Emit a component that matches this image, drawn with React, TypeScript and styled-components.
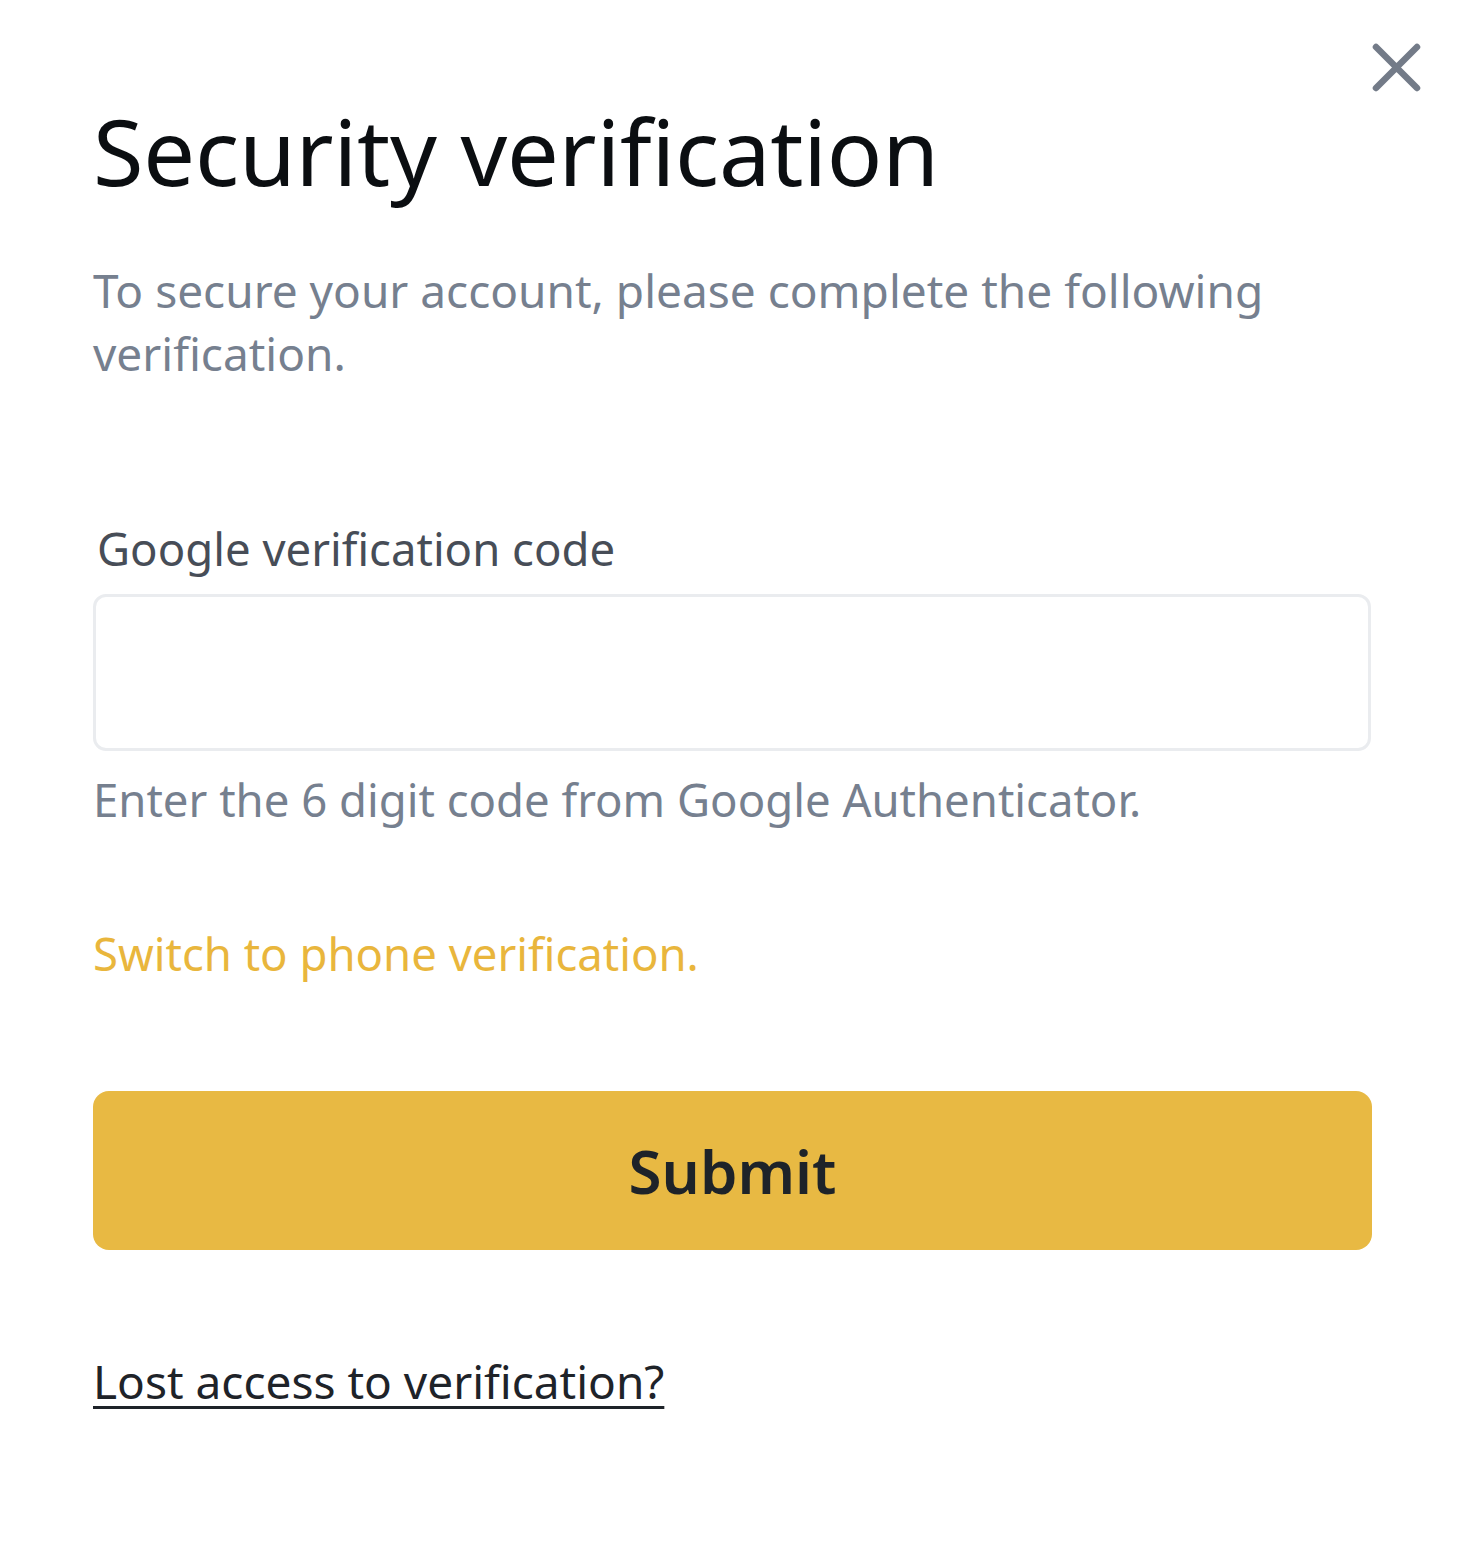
import React, { useState } from 'react';
import styled, { createGlobalStyle } from 'styled-components';

const GlobalStyle = createGlobalStyle`
  * { box-sizing: border-box; }
  html, body {
    margin: 0;
    padding: 0;
    background: #ffffff;
  }
  body {
    font-family: "Noto Sans", "Open Sans", sans-serif;
    -webkit-font-smoothing: antialiased;
  }
`;

const Modal = styled.div`
  position: relative;
  width: 1464px;
  min-height: 1544px;
  background: #ffffff;
  padding: 96px 93px 0 93px;
  display: flex;
  flex-direction: column;
`;

const CloseButton = styled.button`
  position: absolute;
  top: 42px;
  right: 42px;
  width: 51px;
  height: 51px;
  padding: 0;
  border: none;
  background: transparent;
  cursor: pointer;
  display: flex;
  align-items: center;
  justify-content: center;
`;

const Title = styled.h1`
  margin: 0;
  font-size: 92px;
  line-height: 110px;
  font-weight: 400;
  color: #0b0e11;
  letter-spacing: -0.2px;
`;

const Subtitle = styled.p`
  margin: 53px 0 0 0;
  width: 1200px;
  font-size: 46px;
  line-height: 63px;
  color: #76808f;
`;

const Field = styled.div`
  margin-top: 133px;
  display: flex;
  flex-direction: column;
`;

const Label = styled.label`
  padding-left: 4px;
  font-size: 45.5px;
  line-height: 60px;
  color: #474d57;
`;

const Input = styled.input`
  margin-top: 16px;
  width: 1278px;
  height: 157px;
  border: 3px solid #eaecef;
  border-radius: 13px;
  background: #ffffff;
  padding: 0 30px;
  font-family: inherit;
  font-size: 46px;
  color: #1e2329;
  outline: none;
`;

const Hint = styled.p`
  margin: 18px 0 0 0;
  font-size: 45.5px;
  line-height: 60px;
  color: #76808f;
`;

const SwitchLink = styled.a`
  margin-top: 94px;
  align-self: flex-start;
  font-size: 45.5px;
  line-height: 60px;
  color: #e9b63c;
  text-decoration: none;
  cursor: pointer;
`;

const SubmitButton = styled.button`
  margin-top: 108px;
  width: 1279px;
  height: 159px;
  border: none;
  border-radius: 16px;
  background: #e8b943;
  display: flex;
  align-items: center;
  justify-content: center;
  font-family: inherit;
  font-size: 60px;
  font-weight: 600;
  color: #1e2329;
  cursor: pointer;
`;

const LostLink = styled.a`
  margin-top: 101px;
  align-self: flex-start;
  font-size: 46px;
  line-height: 60px;
  color: #1e2329;
  text-decoration: underline;
  text-decoration-thickness: 3px;
  text-underline-offset: 7px;
  cursor: pointer;
`;

const CloseIcon = () => (
  <svg width="51" height="51" viewBox="0 0 51 51" fill="none">
    <path
      d="M5 5 L46 46 M46 5 L5 46"
      stroke="#737b88"
      strokeWidth="6.5"
      strokeLinecap="round"
    />
  </svg>
);

export default function App() {
  const [code, setCode] = useState('');

  return (
    <>
      <GlobalStyle />
      <Modal>
        <CloseButton aria-label="Close">
          <CloseIcon />
        </CloseButton>
        <Title>Security verification</Title>
        <Subtitle>
          To secure your account, please complete the following verification.
        </Subtitle>
        <Field>
          <Label htmlFor="gcode">Google verification code</Label>
          <Input
            id="gcode"
            value={code}
            maxLength={6}
            onChange={(e) => setCode(e.target.value)}
          />
          <Hint>Enter the 6 digit code from Google Authenticator.</Hint>
        </Field>
        <SwitchLink>Switch to phone verification.</SwitchLink>
        <SubmitButton>Submit</SubmitButton>
        <LostLink>Lost access to verification?</LostLink>
      </Modal>
    </>
  );
}
